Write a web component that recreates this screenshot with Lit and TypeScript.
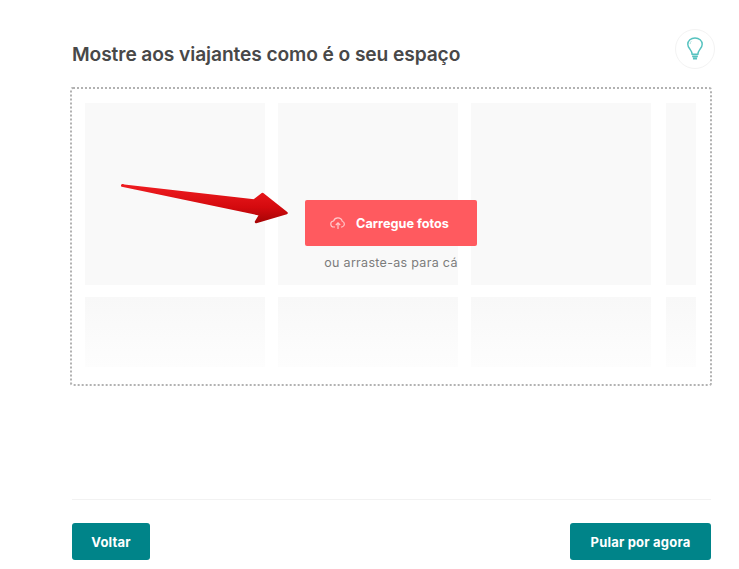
import { LitElement, css, html } from 'lit';
import { customElement } from 'lit/decorators.js';

@customElement('app-root')
export class AppRoot extends LitElement {
  static styles = css`
    :host {
      display: block;
      height: 569px;
      background: #fff;
      font-family: Inter, 'Noto Sans', sans-serif;
      color: #484848;
      overflow: hidden;
    }

    .page {
      display: flex;
      flex-direction: column;
      padding: 29px 28px 0 70px;
    }

    .head {
      display: flex;
      justify-content: space-between;
      align-items: center;
      height: 40px;
      padding-left: 2px;
      margin-bottom: 18px;
    }

    h1 {
      margin: 10px 0 0;
      font-size: 19.2px;
      font-weight: 600;
      letter-spacing: -0.1px;
      color: #484848;
    }

    .tip {
      width: 40px;
      height: 40px;
      margin-right: -4px;
      box-sizing: border-box;
      border: 1px solid #f3f3f3;
      border-radius: 50%;
      display: flex;
      align-items: center;
      justify-content: center;
    }

    .drop {
      position: relative;
      box-sizing: border-box;
      width: 642px;
      height: 299px;
      border: 2px dotted #b2b2b2;
      border-radius: 3px;
      padding: 14px 13px;
      display: flex;
      flex-direction: column;
      gap: 12px;
    }

    .row {
      display: flex;
      gap: 13px;
    }

    .row.tall {
      height: 182px;
    }

    .row.short {
      height: 70px;
    }

    .tile {
      width: 180px;
      background: #f9f9f9;
    }

    .short .tile {
      background: linear-gradient(#f8f8f8, #fdfdfd);
    }

    .tile.cut {
      width: 30px;
      margin-left: 2px;
    }

    .upload {
      position: absolute;
      left: 233px;
      top: 111px;
      width: 172px;
      display: flex;
      flex-direction: column;
      align-items: center;
      gap: 9px;
    }

    .upload button {
      width: 172px;
      height: 46px;
      display: flex;
      align-items: center;
      justify-content: center;
      gap: 10px;
      border: 0;
      border-radius: 2px;
      background: #ff5a5f;
      color: #fff;
      font-family: inherit;
      font-size: 12.7px;
      font-weight: 700;
      padding: 0 3px 0 0;
    }

    .upload span {
      font-size: 12.5px;
      letter-spacing: 0.3px;
      color: #7c7c7c;
      white-space: nowrap;
    }

    .arrow {
      position: absolute;
      left: 49px;
      top: 94px;
    }

    .foot {
      margin-top: 113px;
      margin-left: 2px;
      width: 639px;
      border-top: 1px solid #f2f2f2;
      padding-top: 23px;
      display: flex;
      justify-content: space-between;
    }

    .foot button {
      height: 37px;
      border: 0;
      border-radius: 3px;
      background: #008489;
      color: #fff;
      font-family: inherit;
      font-size: 13px;
      font-weight: 700;
      letter-spacing: 0.2px;
      padding: 0;
    }

    .back {
      width: 78px;
    }

    .skip {
      width: 141px;
    }
  `;

  render() {
    return html`
      <div class="page">
        <div class="head">
          <h1>Mostre aos viajantes como é o seu espaço</h1>
          <div class="tip">
            <svg width="18" height="26" viewBox="0 0 22 30" fill="none" stroke="#55c2bf" stroke-width="1.800">
              <path d="M7.500 21.500c0-3-1.200-4.400-3-6.800C3 12.700 2.200 11 2.200 9.200 2.200 4.700 6 1.500 11 1.500s8.800 3.200 8.800 7.700c0 1.800-.8 3.500-2.300 5.500-1.800 2.400-3 3.800-3 6.800z" />
              <path d="M6.500 5.500C5.500 6.500 5 7.800 5 9" stroke-width="1.200" stroke="#a5dedc" />
              <path d="M7.500 24h7M8.500 26.500h5" stroke-width="2.400" />
            </svg>
          </div>
        </div>

        <div class="drop">
          <div class="row tall">
            <div class="tile"></div>
            <div class="tile"></div>
            <div class="tile"></div>
            <div class="tile cut"></div>
          </div>
          <div class="row short">
            <div class="tile"></div>
            <div class="tile"></div>
            <div class="tile"></div>
            <div class="tile cut"></div>
          </div>

          <div class="upload">
            <button>
              <svg width="16" height="14" viewBox="0 0 16 14" fill="none" stroke="#ffc9cb" stroke-width="1.200">
                <path d="M5 11H4a3 3 0 0 1-.4-6A4.500 4.500 0 0 1 12.200 5.200 3 3 0 0 1 12 11h-1" />
                <path d="M8 13V7M5.800 9 8 6.800 10.200 9" />
              </svg>
              Carregue fotos
            </button>
            <span>ou arraste-as para cá</span>
          </div>

          <svg class="arrow" width="172" height="46" viewBox="0 0 172 46">
            <defs>
              <linearGradient id="shaft" x1="0" y1="0" x2="0" y2="1">
                <stop offset="0" stop-color="#ee1c20" />
                <stop offset="0.6" stop-color="#d40a0e" />
                <stop offset="1" stop-color="#a80406" />
              </linearGradient>
            </defs>
            <path
              d="M1 2.500 133 17.500 141.500 11 165.500 30 135 39 139.500 31.500z"
              fill="url(#shaft)"
              stroke="url(#shaft)"
              stroke-width="2.500"
              stroke-linejoin="round"
            />
          </svg>
        </div>

        <div class="foot">
          <button class="back">Voltar</button>
          <button class="skip">Pular por agora</button>
        </div>
      </div>
    `;
  }
}
